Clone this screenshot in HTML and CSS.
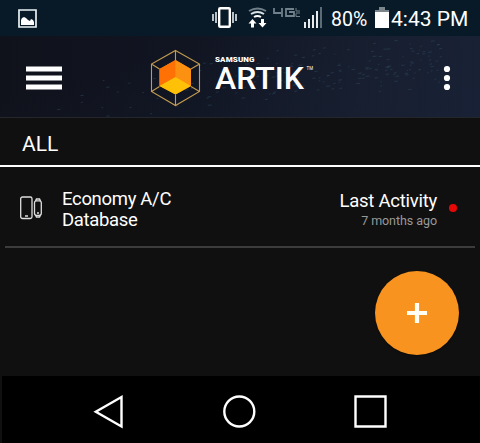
FILE: index.html
```html
<!DOCTYPE html>
<html lang="en">
<head>
<meta charset="utf-8">
<title>ARTIK</title>
<link rel="stylesheet" href="styles.css">
</head>
<body>
<div class="status">
  <svg class="status-photo" width="19" height="19" viewBox="0 0 19 19"><path d="M1 1h17v17H1z" fill="none" stroke="#e9f3f4" stroke-width="1.700"/><path d="M3 16v-5l1-2 2-1 2 1 2 2 2 1 1-2 2 1 1 2v3z" fill="#fff"/></svg>
  <svg class="status-icons" width="112" height="36" viewBox="0 0 112 36">
    <rect x="7.200" y="8.200" width="10.600" height="18.600" rx="1" fill="none" stroke="#fff" stroke-width="2.400"/>
    <path d="M1 14v7M4 12v11M21 12v11M24 14v7" stroke="#e4eaed" stroke-width="1.6"/>
    <g fill="none" stroke-width="2"><path d="M37 11q8.500-5 17 0" stroke="#71818b"/><path d="M39 14q6.500-4 13 0" stroke="#dce3e6"/><path d="M42 17q3.500-2 7 0" stroke="#fff"/></g>
    <path d="M40.500 19l4 4.500h-2.500v4h-3v-4h-2.500zM50.500 27.500l4-4.500h-2.500v-4h-3v4h-2.500z" fill="#fff"/>
    <path d="M62 8v5h7M70 8v9M82 9h-8v7h8v-4h-5" fill="none" stroke="#71808a" stroke-width="1.800"/>
    <path d="M84 8v3h4M84 13h4M88 16.500h-4v-3" fill="none" stroke="#71808a" stroke-width="1"/>
    <path d="M93 22v6M97 19v9M101 15v13M105 11v17" stroke="#fff" stroke-width="1.800"/><path d="M109 7v21" stroke="#667681" stroke-width="1.800"/>
  </svg>
  <span class="percent">80%</span>
  <svg class="battery" width="14" height="21" viewBox="0 0 14 21"><path d="M4 0h6v3h4v4H0V3h4z" fill="#7a858c"/><path d="M0 5h14v16H0z" fill="#fff"/></svg>
  <span class="clock">4:43 PM</span>
</div>
<header class="header">
  <svg width="480" height="81" viewBox="0 0 480 81">
    <path id="stars" class="stars" d=""/>
    <path class="menu" d="M26 33h36M26 42h36M26 51h36"/>
    <path d="M175.500 24l15.500 9v17l-15.500 8.500-16-8.500V33z" fill="#ff8a05"/>
    <path d="M175.500 24v18l-16 8V33z" fill="#ff7105"/><path d="M175.500 24l15.500 9v17l-15.500-9z" fill="#fb9011"/><path d="M175.500 41l15.500 9-15.500 8.500-16-8.500z" fill="#ffc108"/>
    <path d="M175.500 14.500L199.500 28v27.500l-24 14-24-14V28zM175.500 14.500V24M151.500 28l8 5M199.500 28l-8.500 5M151.500 55.500l8-5M199.500 55.500l-8.500-5M175.500 69.500v-11" fill="none" stroke="#c39b50" stroke-width="1.100"/>
    <text class="brand-small" x="215" y="26.300" textLength="39.500">SAMSUNG</text>
    <text class="brand" x="215" y="52.500" textLength="89" lengthAdjust="spacingAndGlyphs">ARTIK</text>
    <text class="brand-mark" x="306.500" y="33.500" textLength="6.500" lengthAdjust="spacingAndGlyphs">TM</text>
    <g fill="#fff"><circle cx="447" cy="33" r="3.100"/><circle cx="447" cy="42" r="3.100"/><circle cx="447" cy="51" r="3.100"/></g>
  </svg>
</header>
<main class="main">
  <h1 class="tab">ALL</h1>
  <section class="device">
    <svg class="device-icon" width="24" height="24" viewBox="0 0 24 24" fill="none" stroke="#ddd"><rect x="0.700" y="1" width="11.300" height="21.500" rx="1.800" stroke-width="1.300"/><path d="M5 20h3" stroke-width="1.500"/><rect x="14.500" y="4.800" width="6.800" height="14.500" rx="2" stroke-width="1.300"/><path d="M15.500 5l1-2h3l1 2M15.500 19l1 2h3l1-2M17 17h2" stroke-width="1.500"/></svg>
    <div class="device-name">Economy A/C<br>Database</div>
    <div class="activity"><div class="activity-label">Last Activity</div><div class="activity-time">7 months ago</div></div>
    <span class="dot"></span>
  </section>
  <button class="add" aria-label="Add"><svg width="20" height="20" viewBox="0 0 20 20"><path d="M10 0v20M0 10h20" stroke="#fffef5" stroke-width="4.200"/></svg></button>
</main>
<nav class="nav">
  <svg width="478" height="67" viewBox="0 0 478 67" fill="none" stroke="#fff" stroke-width="2.400"><path d="M119.500 21v29.500L93.800 35.700z"/><circle cx="237.300" cy="35.500" r="15"/><path d="M353.500 20.500h30v30h-30z"/></svg>
</nav>
<script src="script.js"></script>
</body>
</html>
```
FILE: styles.css
```css
* { box-sizing: border-box; }
body { margin: 0; width: 480px; height: 443px; overflow: hidden; background: #101010; color: #fff; font-family: Roboto, sans-serif; }
svg { display: block; flex: none; }
.status { height: 36px; display: flex; background: #081a27; white-space: nowrap; line-height: 38px; }
.status-photo { margin: 9px 175px 0 18px; }
.percent { width: 44px; padding: 1px 0 0 7px; font-size: 19.5px; }
.battery { margin: 7px 2px 0 7px; }
.clock { font-size: 21px; }
.header { height: 82px; background: linear-gradient(165deg, transparent 30%, #17213555), linear-gradient(90deg, #10121b, #111522 40%, #171e2e 75%, #192135); border-bottom: 1px solid #25262c; }
.stars { fill: none; stroke: #31536a; stroke-width: .9; opacity: .45; }
.menu { fill: none; stroke: #fff; stroke-width: 5; }
.brand, .brand-small, .brand-mark { fill: #fff; font-family: Roboto, sans-serif; }
.brand { font-size: 31px; font-weight: 500; }
.brand-small { font-size: 8px; font-weight: 900; }
.brand-mark { font-size: 5px; }
.main { height: 258px; }
.tab { margin: 0; height: 49px; padding-left: 22px; border-bottom: 2px solid #fff; font-size: 21px; font-weight: 400; line-height: 52px; }
.device { height: 81px; margin: 0 5px; border-bottom: 2px solid #3c3c3c; display: flex; }
.device-icon { margin: 29px 18px 0 15px; }
.device-name { width: 160px; padding-top: 22px; font-size: 18.5px; line-height: 21px; letter-spacing: -.32px; }
.activity { flex: 1; text-align: right; padding-top: 24px; }
.activity-label { font-size: 18.5px; line-height: 21px; letter-spacing: -.25px; }
.activity-time { font-size: 12.5px; line-height: 18px; color: #999; letter-spacing: -.06px; }
.dot { width: 8px; height: 8px; margin: 37px 18px 0 12px; border-radius: 50%; background: #e80707; }
.add { display: flex; align-items: center; justify-content: center; width: 84px; height: 84px; margin: 23px 21px 0 auto; padding: 0; border: 0; border-radius: 50%; background: #f7931e; box-shadow: 0 1px 2px #0005; }
.nav { height: 67px; margin-left: 2px; background: #000; }
```
FILE: script.js
```js
// Scatter short dashes along a band that rises from the lower left to the right.
let seed = 41;
function rand() {
  seed = (seed * 16807) % 2147483647;
  return seed / 2147483647;
}
let d = "";
for (let i = 0; i < 190; i++) {
  const x = 50 + Math.sqrt(rand()) * 390;
  const center = 64 - (x - 50) * 0.1;
  const y = center + (rand() + rand() - 1) * 28;
  d += "M" + x.toFixed(1) + " " + y.toFixed(1) + "l" + (1 + rand() * 3).toFixed(1) + " -.4";
}
document.getElementById("stars").setAttribute("d", d);
```
